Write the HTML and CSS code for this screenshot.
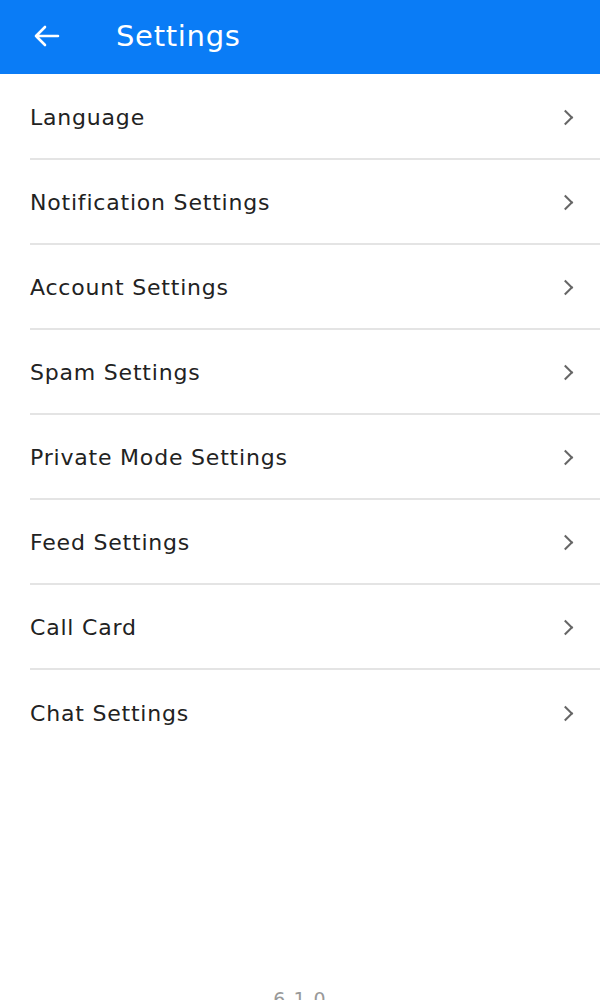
FILE: index.html
```html
<!DOCTYPE html>
<html lang="en">
<head>
  <meta charset="UTF-8">
  <title>Settings</title>
  <link rel="stylesheet" href="styles.css">
</head>
<body>

  <!-- Barra superior -->
  <header class="topbar">
    <svg class="back" width="28" height="24" viewBox="0 0 28 24">
      <path d="M26 12H4M13 3l-9 9 9 9" fill="none" stroke="#fff" stroke-width="2.6" stroke-linecap="round" stroke-linejoin="round"/>
    </svg>
    <h1 class="title">Settings</h1>
  </header>

  <!-- Lista de opciones -->
  <ul class="menu">
    <li class="item"><span>Language</span><i class="chev"></i></li>
    <li class="item"><span>Notification Settings</span><i class="chev"></i></li>
    <li class="item"><span>Account Settings</span><i class="chev"></i></li>
    <li class="item"><span>Spam Settings</span><i class="chev"></i></li>
    <li class="item"><span>Private Mode Settings</span><i class="chev"></i></li>
    <li class="item"><span>Feed Settings</span><i class="chev"></i></li>
    <li class="item"><span>Call Card</span><i class="chev"></i></li>
    <li class="item"><span>Chat Settings</span><i class="chev"></i></li>
  </ul>

  <div class="version">6.1.0</div>

</body>
</html>
```

FILE: styles.css
```css
html, body {
  margin: 0;
  height: 1000px;
  overflow: hidden;
}

body {
  font-family: 'DejaVu Sans', sans-serif;
  background-color: #fff;
  color: #222;
  display: flex;
  flex-direction: column;
}

.topbar {
  height: 74px;
  background-color: #0a7cf6;
  display: flex;
  align-items: center;
  padding: 0 0 3px 32px;
  box-sizing: border-box;
}

.back {
  display: block;
}

.title {
  margin: 0 0 0 56px;
  color: #fff;
  font-size: 29px;
  font-weight: 500;
  letter-spacing: 0.7px;
}

.menu {
  list-style: none;
  margin: 0;
  padding: 0 0 0 30px;
}

.item {
  height: 85px;
  display: flex;
  align-items: center;
  justify-content: space-between;
  border-bottom: 2px solid #e4e4e4;
  box-sizing: border-box;
  font-size: 22px;
  letter-spacing: 0.8px;
  padding-top: 2px;
}

.item:first-child {
  height: 86px;
}

.item:last-child {
  border-bottom: none;
}

.chev {
  width: 9px;
  height: 9px;
  border-top: 2.5px solid #666;
  border-right: 2.5px solid #666;
  transform: rotate(45deg);
  margin-right: 29px;
}

.version {
  margin-top: auto;
  text-align: center;
  color: #999;
  font-size: 19px;
  letter-spacing: 1px;
  line-height: 1;
  margin-bottom: -9px;
}
```
